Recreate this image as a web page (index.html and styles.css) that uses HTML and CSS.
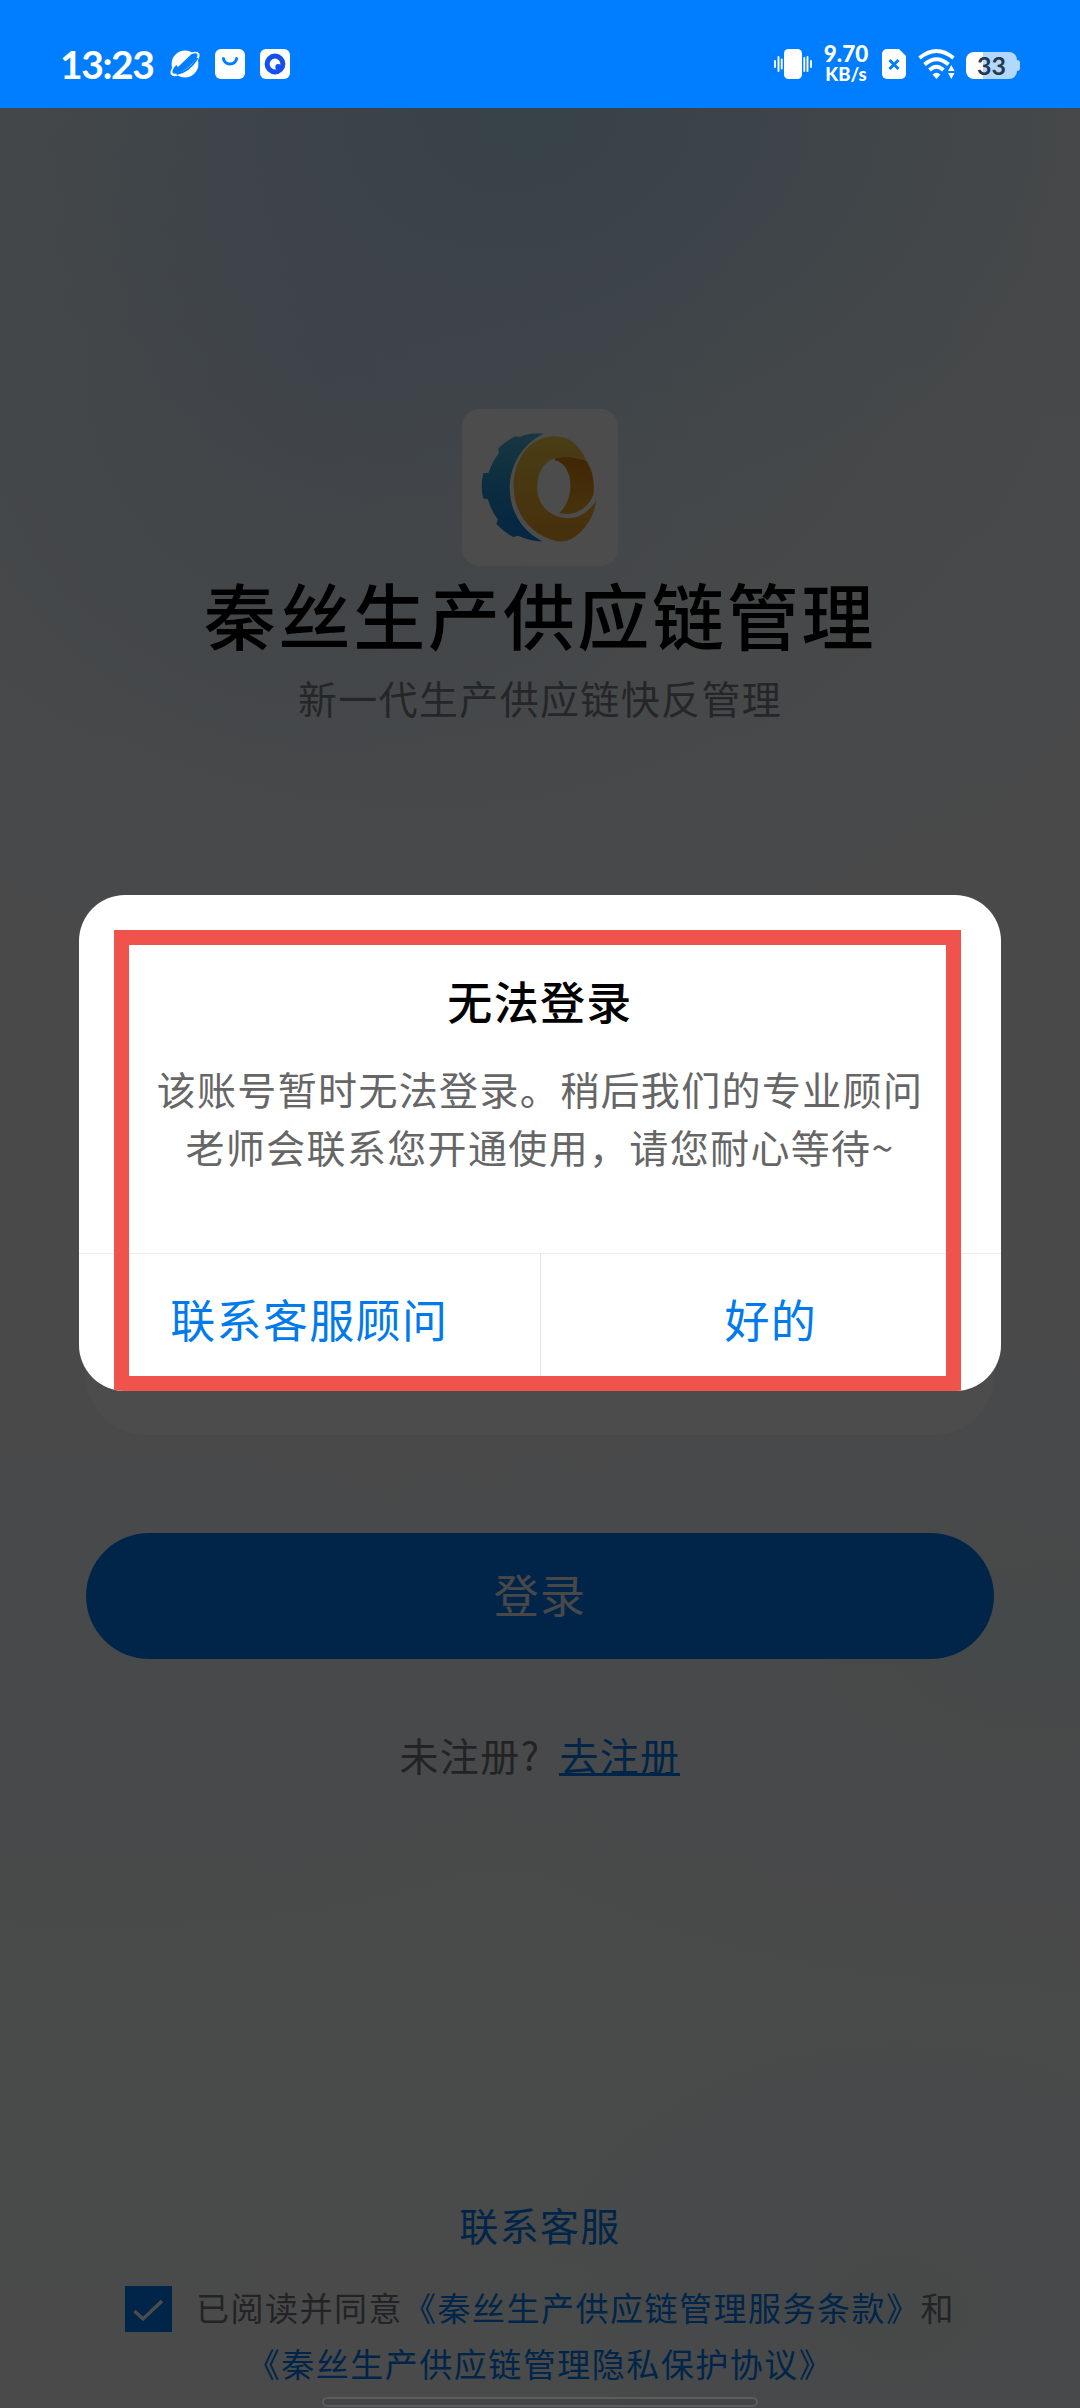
FILE: index.html
```html
<!DOCTYPE html>
<html lang="zh-CN">
<head>
<meta charset="utf-8">
<title>秦丝生产供应链管理</title>
<link rel="stylesheet" href="styles.css">
</head>
<body>
<header class="status">
  <span class="time">13:23</span>
  <svg class="ic planet" viewBox="0 0 32 32"><circle cx="16" cy="16" r="13.4" fill="#fff"/><ellipse cx="16" cy="16" rx="17.6" ry="7" transform="rotate(-38 16 16)" fill="#fff"/><ellipse cx="16.2" cy="15.6" rx="15.4" ry="4.9" transform="rotate(-38 16 16)" fill="#007eff"/><path d="M7 12Q12 4 22 6.500L9 19Q6 17 7 12z" fill="#fff"/><path d="M4.500 22.500Q15 19 26 6.500" stroke="#007eff" stroke-width="1.800" fill="none"/><path d="M7.500 26Q20 24 28.500 10" stroke="#007eff" stroke-width="1.800" fill="none"/></svg>
  <svg class="ic bag" viewBox="0 0 30 30"><rect width="30" height="30" rx="6" fill="#fff"/><path d="M8.500 9.500a6.500 5.400 0 0 0 13 0" fill="none" stroke="#007eff" stroke-width="3" stroke-linecap="round"/></svg>
  <svg class="ic eye" viewBox="0 0 30 30"><rect width="30" height="30" rx="6" fill="#fff"/><circle cx="15" cy="15" r="7.9" fill="none" stroke="#1550ee" stroke-width="5"/><circle cx="18.3" cy="18" r="3" fill="#1550ee"/></svg>
  <span class="spacer"></span>
  <svg class="ic vibrate" viewBox="0 0 38 32" fill="#fff"><rect x="10" y="1" width="18" height="30" rx="4.5"/><path d="M1 13v6M4.500 9v14M7.700 11.500v9M30.300 10v13M33.500 9v14M37 13v6" stroke="#fff" stroke-width="1.900" stroke-linecap="round"/></svg>
  <span class="speed"><span class="rate">9.70</span><span class="unit">KB/s</span></span>
  <svg class="ic sim" viewBox="0 0 24 30"><path d="M5 0h12l7 7v18a5 5 0 0 1-5 5H5a5 5 0 0 1-5-5V5a5 5 0 0 1 5-5z" fill="#fff"/><path d="M7.500 11l9 9M16.500 11l-9 9" stroke="#007eff" stroke-width="3"/></svg>
  <svg class="ic wifi" viewBox="0 0 38 30"><g fill="none" stroke="#fff" stroke-width="3.800"><path d="M1.500 9Q18.500-5 35.500 9"/><path d="M6.500 15.500Q18.500 5 30.500 15.500"/><path d="M11.500 21Q18.500 14.500 25.500 21"/></g><path d="M14.500 25.500q4-3.500 8 0l-4 4.500zM30 22l3.300-6 3.300 6zM30 24h6.600l-3.300 6z" fill="#fff"/></svg>
  <span class="battery">33</span>
</header>

<main class="page">
  <svg class="logo" viewBox="66 58 469 472">
    <defs>
      <linearGradient id="blue" x1="0" y1="0" x2="0" y2="1"><stop offset="0" stop-color="#55b8d8"/><stop offset=".5" stop-color="#2597d2"/><stop offset="1" stop-color="#147de0"/></linearGradient>
      <linearGradient id="gold" x1="0" y1="0" x2="0" y2="1"><stop offset="0" stop-color="#f3cf4c"/><stop offset="1" stop-color="#ee9f24"/></linearGradient>
      <linearGradient id="amber" x1="0" y1="0" x2="0" y2="1"><stop offset="0" stop-color="#d98210"/><stop offset="1" stop-color="#edaa25"/></linearGradient>
    </defs>
    <rect x="66" y="58" width="469" height="472" rx="54" fill="#fff"/>
    <path d="M312 132Q272 128 239 142L226 140Q198 154 175 176L177 190Q156 216 146 250L130 251Q120 288 130 327L144 329Q152 362 174 390L169 404Q192 428 220 443L235 439Q272 456 308 456C176 390 176 200 312 132Z" fill="url(#blue)"/>
    <path d="M345 140C270 140 221 208 221 290C221 380 282 440 350 455Q375 459 395 449C430 428 462 390 470 332C440 378 408 387 378 386C322 380 291 340 292 290C293 245 317 214 345 206Q400 196 440 215C420 165 388 140 345 140Z" fill="url(#gold)"/>
    <path d="M345 212C375 218 394 252 392 292C391 325 377 354 358 371C408 384 450 350 461 315Q468 262 442 216Q400 195 345 206Z" fill="url(#amber)"/>
  </svg>
  <h1 class="brand">秦丝生产供应链管理</h1>
  <p class="slogan">新一代生产供应链快反管理</p>
  <section class="form-card"></section>
  <button class="login">登录</button>
  <p class="signup"><span>未注册?</span><a>去注册</a></p>
  <footer class="foot">
    <a class="service">联系客服</a>
    <div class="agree">
      <svg class="check" viewBox="0 0 47 46"><rect width="47" height="46" fill="#007cf6"/><path d="M9.500 25l8.500 8 19-18" fill="none" stroke="#fff" stroke-width="3.400"/></svg>
      <p>已阅读并同意<a>《秦丝生产供应链管理服务条款》</a>和</p>
    </div>
    <a class="privacy">《秦丝生产供应链管理隐私保护协议》</a>
  </footer>
</main>

<div class="mask">
  <section class="dialog">
    <h2>无法登录</h2>
    <p class="message">该账号暂时无法登录。稍后我们的专业顾问<br>老师会联系您开通使用，请您耐心等待~</p>
    <div class="actions"><button>联系客服顾问</button><button>好的</button></div>
    <div class="highlight"></div>
  </section>
  <div class="home-bar"></div>
</div>
</body>
</html>
```
FILE: styles.css
```css
* { box-sizing: border-box; margin: 0; padding: 0; }

body {
  position: relative;
  width: 1080px;
  height: 2408px;
  overflow: hidden;
  font-family: "Noto Sans CJK SC", sans-serif;
  font-weight: 400;
  letter-spacing: 1.35px;
}

button { border: 0; background: none; font: inherit; letter-spacing: inherit; }

/* status bar */
.status {
  display: flex;
  align-items: center;
  height: 108px;
  padding: 20px 60px 0 60px;
  background: #007eff;
  color: #fff;
  font-family: Lato, sans-serif;
  font-weight: 700;
  letter-spacing: 0;
}
.ic { display: block; flex: none; overflow: visible; }
.time { width: 109px; font-size: 39px; line-height: 40px; letter-spacing: -1.4px; }
.planet { width: 32px; height: 32px; }
.bag { width: 30px; height: 30px; margin-left: 14px; }
.eye { width: 30px; height: 30px; margin-left: 15px; }
.spacer { flex: 1; }
.vibrate { width: 38px; height: 32px; }
.speed { display: flex; flex-direction: column; align-items: center; width: 48px; margin-left: 10px; font-weight: 900; }
.rate { font-size: 22.5px; line-height: 20px; }
.unit { font-size: 18.5px; line-height: 20px; }
.sim { width: 24px; height: 30px; margin-left: 12px; }
.wifi { width: 38px; height: 30px; margin-left: 12px; }
.battery {
  position: relative;
  width: 51px;
  height: 27px;
  margin: 2px 3px 0 10px;
  border-radius: 8px;
  background: linear-gradient(90deg, #fff 33%, #b3d8ff 33%);
  color: #26384d;
  font-size: 25px;
  line-height: 27px;
  text-align: center;
}
.battery::after {
  content: "";
  position: absolute;
  left: 51px;
  top: 8px;
  width: 3px;
  height: 11px;
  border-radius: 0 3px 3px 0;
  background: #b3d8ff;
}

/* login page */
.page {
  display: flex;
  flex-direction: column;
  align-items: center;
  height: 2300px;
  padding-top: 301px;
  background:
    radial-gradient(ellipse 560px 420px at 530px 0, #b9dcf5 0, rgba(192, 220, 243, .6) 45%, rgba(215, 232, 245, 0) 100%),
    radial-gradient(ellipse 420px 420px at 330px 260px, rgba(208, 222, 242, .7) 0, rgba(225, 238, 250, 0) 100%),
    radial-gradient(ellipse 900px 850px at 420px 100px, rgba(228, 240, 246, 1) 0, rgba(230, 241, 246, .8) 60%, rgba(240, 246, 250, 0) 100%),
    radial-gradient(ellipse 800px 380px at 1080px 1540px, rgba(232, 243, 245, .8) 0, rgba(240, 248, 250, 0) 100%),
    radial-gradient(ellipse 700px 300px at 100px 1560px, rgba(234, 244, 247, .8) 0, rgba(240, 248, 250, 0) 100%),
    radial-gradient(ellipse 440px 330px at 900px 2200px, rgba(234, 242, 244, .7) 0, rgba(238, 246, 248, .5) 70%, rgba(240, 248, 250, 0) 100%),
    linear-gradient(#f1f4f5 0, #f5f6f8 800px, #f5f6f8 1500px, #f7f8f9 2300px);
}
.logo { width: 156px; height: 157px; }
.brand { margin-top: 3px; font-size: 72px; font-weight: 500; line-height: 88px; letter-spacing: 2.7px; color: #000; }
.slogan { margin-top: 14px; font-size: 39px; line-height: 52px; color: #7c7f86; }
.form-card { width: 908px; height: 506px; margin-top: 206px; border-radius: 60px; background: #fff; }
.login {
  width: 908px;
  height: 126px;
  margin-top: 98px;
  padding-bottom: 5px;
  border-radius: 63px;
  background: #007cf6;
  color: #f2f2f2;
  font-size: 45px;
}
.signup { display: flex; gap: 19px; margin-top: 69px; font-size: 39px; line-height: 52px; color: #75777c; }
.signup a { color: #007cf6; border-bottom: 3px solid #007cf6; height: 48px; }
.foot { display: flex; flex-direction: column; align-items: center; margin-top: 418px; color: #75777c; }
.foot a { color: #007cf6; }
.service { font-size: 39px; line-height: 52px; }
.agree { display: flex; align-items: center; gap: 24px; margin-top: 36px; font-size: 33px; line-height: 46px; letter-spacing: 1.5px; }
.agree p { margin-top: -4px; }
.check { width: 47px; height: 46px; }
.privacy { margin-top: 6px; font-size: 33px; line-height: 50px; letter-spacing: 1.5px; }

/* modal layer above the page */
.mask {
  position: absolute;
  inset: 108px 0 0;
  display: flex;
  flex-direction: column;
  align-items: center;
  justify-content: space-between;
  padding-top: 787px;
  background: rgba(0, 0, 0, .7);
}
.dialog {
  position: relative;
  width: 922px;
  height: 496px;
  overflow: hidden;
  border-radius: 46px;
  background: #fff;
  text-align: center;
}
.dialog h2 { margin-top: 76px; font-size: 45px; font-weight: 500; line-height: 60px; color: #000; }
.message { height: 116px; margin-top: 28px; font-size: 39px; line-height: 58px; color: #666; }
.actions { display: flex; height: 138px; margin-top: 78px; border-top: 1px solid #ededed; }
.actions button { flex: 1; padding-bottom: 8px; font-size: 45px; color: #007aec; }
.actions button + button { border-left: 1px solid #e2e2e2; }
.highlight { position: absolute; left: 35px; top: 35px; width: 847px; height: 461px; border: 15px solid #f0534c; }
.home-bar {
  width: 436px;
  height: 10px;
  margin-bottom: 1px;
  border: 2px solid #5a5c5d;
  border-radius: 5px;
  background: #424445;
}
```
